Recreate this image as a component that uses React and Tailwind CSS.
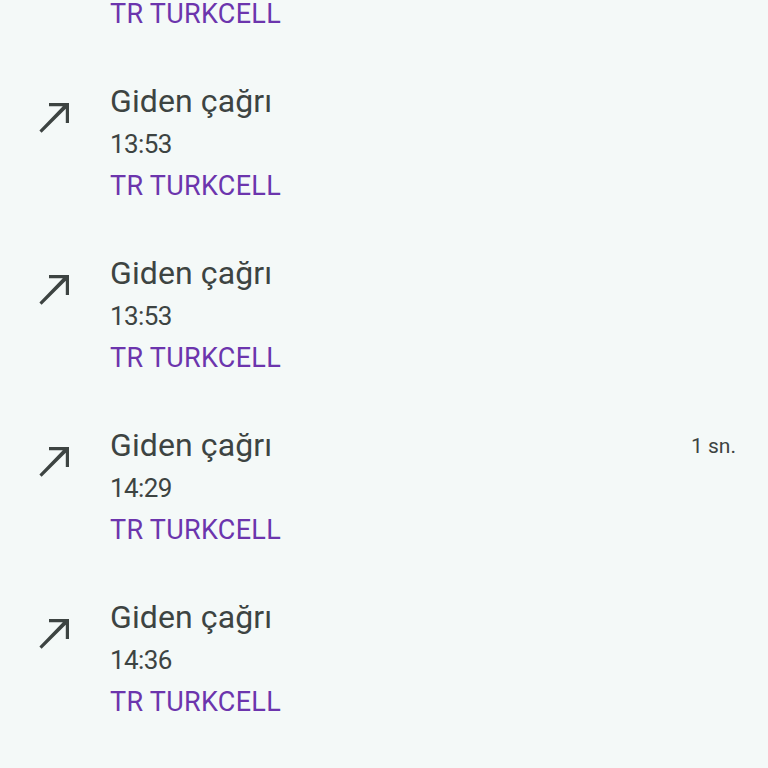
import { useState } from 'react'

const calls = [
  { time: '13:40', carrier: 'TR TURKCELL' },
  { time: '13:53', carrier: 'TR TURKCELL' },
  { time: '13:53', carrier: 'TR TURKCELL' },
  { time: '14:29', carrier: 'TR TURKCELL', duration: '1 sn.' },
  { time: '14:36', carrier: 'TR TURKCELL' },
]

function OutgoingIcon() {
  return (
    <svg className="w-12 h-12 text-[#3d4442]" viewBox="0 0 24 24" fill="currentColor">
      <path d="M9 5v1.6h6.9L4.2 18.8 5.3 19.9 17.4 7.9V15H19V5z" />
    </svg>
  )
}

function CallRow({ call }) {
  return (
    <div className="flex h-[126px] shrink-0">
      <div className="w-[110px] shrink-0 pl-[31px] pt-[13px]">
        <OutgoingIcon />
      </div>
      <div className="flex-1 flex flex-col pr-8">
        <div className="flex items-center justify-between h-[42px]">
          <span className="text-[32px] leading-[42px] tracking-[0.1px] text-[#3d4442]">Giden çağrı</span>
          {call.duration && (
            <span className="text-[21px] pt-[3px] text-[#3d4442]">{call.duration}</span>
          )}
        </div>
        <span className="text-[26px] leading-[44px] tracking-[-0.6px] text-[#3d4442]">{call.time}</span>
        <span className="text-[27px] leading-[40px] tracking-[0.3px] text-[#6c35ad]">{call.carrier}</span>
      </div>
    </div>
  )
}

export default function App() {
  const [items] = useState(calls)

  return (
    <div
      className="h-screen overflow-hidden bg-[#f4f9f8]"
      style={{ fontFamily: 'Roboto, "Noto Sans", sans-serif' }}
    >
      <div className="flex flex-col gap-[46px] -mt-[92px]">
        {items.map((c, i) => (
          <CallRow key={i} call={c} />
        ))}
      </div>
    </div>
  )
}
